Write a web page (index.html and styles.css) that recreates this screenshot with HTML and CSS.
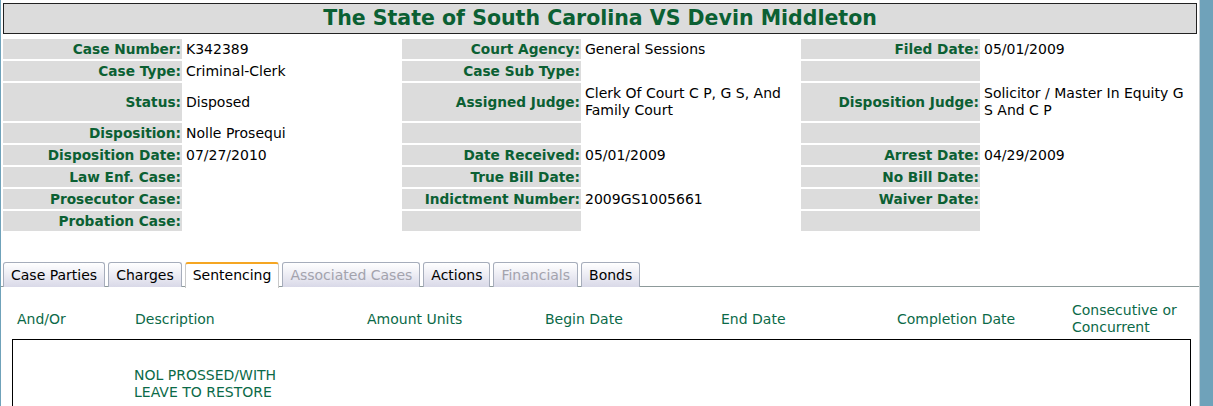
FILE: index.html
```html
<!DOCTYPE html>
<html lang="en">
<head>
  <meta charset="UTF-8" />
  <title>The State of South Carolina VS Devin Middleton</title>
  <link rel="stylesheet" href="styles.css">
</head>
<body>
  <div class="page">
    <h1 class="case-title">The State of South Carolina VS Devin Middleton</h1>

    <!-- ── Case Details ─────────────────────────────────────────── -->
    <table class="details">
      <colgroup>
        <col class="c-label"><col class="c-value">
        <col class="c-label"><col class="c-value">
        <col class="c-label"><col>
      </colgroup>
      <tr>
        <th>Case Number:</th><td>K342389</td>
        <th>Court Agency:</th><td>General Sessions</td>
        <th>Filed Date:</th><td>05/01/2009</td>
      </tr>
      <tr>
        <th>Case Type:</th><td>Criminal-Clerk</td>
        <th>Case Sub Type:</th><td></td>
        <th></th><td></td>
      </tr>
      <tr class="tall">
        <th>Status:</th><td>Disposed</td>
        <th>Assigned Judge:</th><td>Clerk Of Court C P, G S, And Family Court</td>
        <th>Disposition Judge:</th><td>Solicitor / Master In Equity G S And C P</td>
      </tr>
      <tr>
        <th>Disposition:</th><td>Nolle Prosequi</td>
        <th></th><td></td>
        <th></th><td></td>
      </tr>
      <tr>
        <th>Disposition Date:</th><td>07/27/2010</td>
        <th>Date Received:</th><td>05/01/2009</td>
        <th>Arrest Date:</th><td>04/29/2009</td>
      </tr>
      <tr>
        <th>Law Enf. Case:</th><td></td>
        <th>True Bill Date:</th><td></td>
        <th>No Bill Date:</th><td></td>
      </tr>
      <tr>
        <th>Prosecutor Case:</th><td></td>
        <th>Indictment Number:</th><td>2009GS1005661</td>
        <th>Waiver Date:</th><td></td>
      </tr>
      <tr>
        <th>Probation Case:</th><td></td>
        <th></th><td></td>
        <th></th><td></td>
      </tr>
    </table>

    <!-- ── Tabs ──────────────────────────────────────────────────── -->
    <ul class="tabs">
      <li class="tab">Case Parties</li>
      <li class="tab">Charges</li>
      <li class="tab active">Sentencing</li>
      <li class="tab disabled">Associated Cases</li>
      <li class="tab">Actions</li>
      <li class="tab disabled">Financials</li>
      <li class="tab">Bonds</li>
    </ul>

    <!-- ── Sentencing ────────────────────────────────────────────── -->
    <div class="sent-head">
      <span>And/Or</span>
      <span>Description</span>
      <span>Amount Units</span>
      <span>Begin Date</span>
      <span>End Date</span>
      <span>Completion Date</span>
      <span>Consecutive or Concurrent</span>
    </div>
    <div class="sent-box">
      <div class="sent-row">
        <span></span>
        <span class="desc">NOL PROSSED/WITH LEAVE TO RESTORE</span>
      </div>
    </div>
  </div>
</body>
</html>
```

FILE: styles.css
```css
html, body {
  margin: 0;
  height: 100%;
}
body {
  background: #6fa2ba;
  font-family: "DejaVu Sans", Verdana, sans-serif;
  font-size: 14px;
  overflow: hidden;
}
.page {
  margin-left: 1px;
  width: 1199px;
  min-height: 100%;
  background: #fff;
  border-right: 1px solid #c8d0d4;
  box-sizing: border-box;
  overflow: hidden;
}
.case-title {
  margin: 3px 2px 0 2px;
  height: 29px;
  line-height: 29px;
  border: 1px solid #222;
  background: #dcdcdc;
  color: #0b6033;
  font-size: 20.5px;
  font-weight: bold;
  text-align: center;
}
.details {
  margin-top: 3px;
  width: 1199px;
  table-layout: fixed;
  border-spacing: 2px;
  font-size: 14px;
}
.details .c-label {
  width: 179px;
}
.details .c-value {
  width: 216px;
}
.details tr {
  height: 20px;
}
.details tr.tall {
  height: 38px;
}
.details th {
  background: #dcdcdc;
  color: #0b6033;
  text-align: right;
  padding: 0 1px 0 0;
  white-space: nowrap;
  font-size: 13.7px;
}
.details td {
  color: #000;
  padding: 0 4px 0 2px;
  line-height: 17px;
}
.tabs {
  list-style: none;
  display: flex;
  gap: 3px;
  margin: 29px 0 0;
  padding: 0 0 0 2px;
  border-bottom: 1px solid #8d9a9a;
  height: 24px;
}
.tab {
  height: 24px;
  line-height: 24px;
  padding: 0 7px;
  border: 1px solid #a6adbb;
  border-bottom: none;
  border-radius: 3px 3px 0 0;
  background: linear-gradient(#ffffff, #d9d9e8);
  color: #000;
  font-size: 14px;
}
.tab.active {
  background: #fff;
  border-color: #c9c9c9;
  border-top: 2px solid #f5a623;
  height: 24px;
  margin-bottom: -1px;
  line-height: 23px;
}
.tab.disabled {
  color: #a3a3ad;
}
.sent-head,
.sent-row {
  display: grid;
  grid-template-columns: 118px 232px 178px 176px 176px 175px 1fr;
  color: #0b6a48;
  font-size: 14px;
  line-height: 17px;
}
.sent-head {
  padding: 12px 0 0 16px;
  height: 52px;
  box-sizing: border-box;
  align-items: center;
}
.sent-box {
  margin: 0 8px 0 11px;
  border: 1px solid #000;
  border-bottom: none;
  height: 80px;
  padding: 27px 0 0 3px;
  box-sizing: border-box;
}
.sent-row .desc {
  width: 180px;
}
```
